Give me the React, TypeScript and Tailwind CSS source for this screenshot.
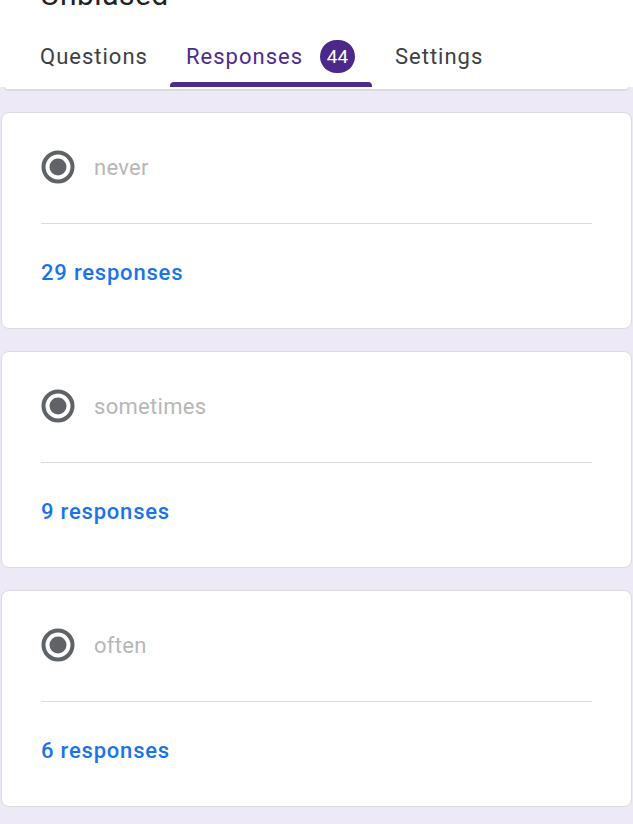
import React from 'react';

const options = [
  { label: 'never', count: 29 },
  { label: 'sometimes', count: 9 },
  { label: 'often', count: 6 },
];

function Radio() {
  return (
    <svg width="34" height="34" viewBox="0 0 34 34" className="shrink-0">
      <circle cx="17" cy="17" r="14.5" fill="none" stroke="#5f6368" strokeWidth="4" />
      <circle cx="17" cy="17" r="8.5" fill="#5f6368" />
    </svg>
  );
}

export default function App() {
  return (
    <div className="h-[824px] w-[633px] overflow-hidden bg-[#ede9f7]" style={{ fontFamily: 'Roboto, "Open Sans", sans-serif' }}>
      {/* Header */}
      <div className="bg-white">
        <div className="px-10 -mt-[22px] h-[35px] text-[30px] leading-[34px] tracking-[0.5px] text-[#202124]">Unbiased</div>
        <div className="flex items-end h-[74px] pl-10 text-[22px] leading-[25px] tracking-[1px]">
          <div className="w-[107px] pb-[18px] text-[#3c4043]">Questions</div>
          <div className="ml-[23px] flex flex-col">
            <div className="flex items-center pl-[16px] pr-[17px] pb-[9px]">
              <span className="w-[114px] text-[#4e2a8e]">Responses</span>
              <span className="ml-[20px] flex h-[33px] w-[35px] items-center justify-center rounded-full bg-[#4b2889] text-[19px] tracking-normal text-white">44</span>
            </div>
            <div className="h-[5px] rounded-t-[4px] bg-[#4e2a8e]" />
          </div>
          <div className="ml-[23px] pb-[18px] text-[#3c4043]">Settings</div>
        </div>
      </div>

      {/* bottom of previous card */}
      <div className="mx-[4px] h-[4px] rounded-b-[6px] border-b-2 border-x border-[#dadce0] bg-white" />

      <div className="mt-[21px] flex flex-col gap-[22px]">
        {options.map((o) => (
          <div key={o.label} className="mx-[1px] h-[217px] rounded-[8px] border border-[#dadce0] bg-white px-[39px]">
            <div className="flex h-[110px] items-center gap-[19px] pb-[2px]">
              <Radio />
              <span className="text-[22px] tracking-[0.3px] text-[#b7b7b7]">{o.label}</span>
            </div>
            <div className="h-px bg-[#dadce0]" />
            <div className="flex h-[96px] items-center text-[22px] font-medium tracking-[0.8px] text-[#1a73e8]">
              {o.count} responses
            </div>
          </div>
        ))}
      </div>
    </div>
  );
}
